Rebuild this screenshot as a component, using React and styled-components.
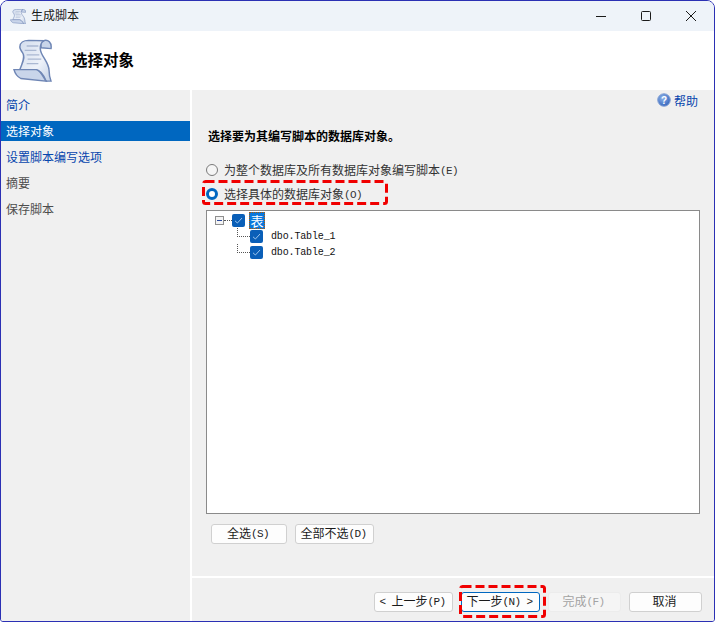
import React from "react";
import styled, { createGlobalStyle } from "styled-components";

const Global = createGlobalStyle`
  html, body {
    margin: 0;
    padding: 0;
    background: #ffffff;
  }
  body {
    font-family: "Noto Sans CJK SC", "Liberation Sans", sans-serif;
    font-size: 12px;
    color: #1a1a1a;
  }
`;

const Window = styled.div`
  width: 715px;
  height: 622px;
  box-sizing: border-box;
  border: 1px solid #2b30b4;
  border-radius: 8px 8px 3px 3px;
  overflow: hidden;
  display: flex;
  flex-direction: column;
  background: #ffffff;
`;

const TitleBar = styled.div`
  height: 30px;
  flex: none;
  display: flex;
  align-items: center;
  background: #eef3f9;
  padding-left: 9px;
`;

const TitleText = styled.span`
  margin: 0 0 2px 5px;
  line-height: 16px;
`;

const Controls = styled.div`
  margin-left: auto;
  display: flex;
`;

const ControlButton = styled.div`
  width: 45.5px;
  height: 28px;
  display: flex;
  align-items: center;
  justify-content: center;
  margin-left: ${(p) => p.$nudge || 0}px;
`;

const Header = styled.div`
  height: 59px;
  flex: none;
  display: flex;
  align-items: center;
  padding-left: 12px;
  background: #ffffff;
`;

const HeaderTitle = styled.h1`
  margin: 0 0 4px 20px;
  font-size: 15.5px;
  font-weight: 700;
  color: #000000;
`;

const Main = styled.div`
  flex: 1;
  display: flex;
  min-height: 0;
`;

const Sidebar = styled.nav`
  width: 189px;
  flex: none;
  box-sizing: border-box;
  margin-right: 2px;
  padding-top: 5px;
  background: #f0f0f0;
  display: flex;
  flex-direction: column;
  gap: 6px;
`;

const NavItem = styled.div`
  height: 20px;
  line-height: 20px;
  padding-left: 5px;
  color: ${(p) => (p.$active ? "#ffffff" : p.$link ? "#0645ad" : "#4d4d4d")};
  background: ${(p) => (p.$active ? "#0067c0" : "transparent")};
`;

const Content = styled.section`
  flex: 1;
  display: flex;
  flex-direction: column;
  background: #f0f0f0;
`;

const HelpRow = styled.div`
  height: 20px;
  margin-bottom: 2px;
  display: flex;
  align-items: center;
  justify-content: flex-end;
  gap: 3px;
  padding-right: 16px;
  color: #0645ad;
`;

const Lead = styled.p`
  margin: 16px 0 18px 16px;
  line-height: 16px;
  font-weight: 700;
  color: #000000;
`;

const RadioRow = styled.label`
  position: relative;
  display: flex;
  align-items: center;
  gap: 6px;
  height: 16px;
  margin: 0 0 8px 14px;
  color: #333333;
`;

const RadioText = styled.span`
  margin-bottom: 2px;
`;

const RadioDot = styled.span`
  width: 12px;
  height: 12px;
  box-sizing: border-box;
  border-radius: 50%;
  background: ${(p) => (p.$on ? "#ffffff" : "#f5f5f5")};
  border: ${(p) => (p.$on ? "3.5px solid #0067c0" : "1px solid #7a7a7a")};
`;

const Lat = styled.span`
  font-family: "Liberation Mono", monospace;
  font-size: 11px;
  letter-spacing: -0.6px;
  vertical-align: 1px;
`;

const TreeBox = styled.div`
  height: 304px;
  box-sizing: border-box;
  margin: 0 14px 0 14px;
  padding: 1px 0 0 8px;
  border: 1px solid #8a8a8a;
  background: #ffffff;
`;

const TreeRow = styled.div`
  height: 16px;
  display: flex;
  align-items: center;
  padding-left: ${(p) => p.$indent || 0}px;
`;

const Expander = styled.span`
  width: 9px;
  height: 9px;
  box-sizing: border-box;
  border: 1px solid #8e8e8e;
  background: #f4f4f4;
  display: flex;
  align-items: center;
  justify-content: center;

  &::before {
    content: "";
    width: 5px;
    height: 1px;
    background: #2b4a9b;
  }
`;

const RootStub = styled.span`
  width: 8px;
  border-top: 1px dotted #555555;
`;

const Twig = styled.span`
  align-self: flex-start;
  width: 12px;
  height: 8px;
  border-left: 1px dotted #555555;
  border-bottom: 1px dotted #555555;
`;

const Check = styled.span`
  width: 13px;
  height: 13px;
  flex: none;
  border-radius: 2px;
  background: #0a5fb8;
  display: flex;
  align-items: center;
  justify-content: center;
`;

const TableTag = styled.span`
  width: 16px;
  height: 17px;
  margin-left: 4px;
  box-sizing: border-box;
  border: 1px dotted #b35a00;
  background: #0a78dc;
  color: #ffffff;
  font-size: 13px;
  line-height: 15px;
  text-align: center;
`;

const NodeText = styled.span`
  margin-left: 8px;
  font-family: "Liberation Mono", monospace;
  font-size: 10px;
  letter-spacing: -0.15px;
  color: #111111;
`;

const SelectRow = styled.div`
  display: flex;
  gap: 8px;
  margin: 10px 0 0 19px;
`;

const Button = styled.button`
  position: relative;
  height: 20px;
  width: ${(p) => p.$w}px;
  padding: 0 2px 2px 0;
  box-sizing: border-box;
  font: inherit;
  line-height: 16px;
  border-radius: 3px;
  border: ${(p) =>
    p.$primary ? "1.5px solid #0067c0" : p.$off ? "1px solid #ececec" : "1px solid #d0d0d0"};
  background: ${(p) => (p.$off ? "#f5f5f5" : "#fdfdfd")};
  color: ${(p) => (p.$off ? "#a3a3a3" : "#1a1a1a")};
`;

const Footer = styled.div`
  margin-top: auto;
  height: 45px;
  box-sizing: border-box;
  border-top: 2px solid #ffffff;
  padding: 14px 12px 0 0;
  display: flex;
  justify-content: flex-end;
  gap: 8px;
`;

const DashFrame = styled.svg`
  position: absolute;
  left: ${(p) => p.$left}px;
  top: ${(p) => p.$top}px;
  pointer-events: none;
  overflow: visible;
`;

// red annotation drawn over the dialog, dashes are longer than css dashed gives
const RedDash = ({ left, top, w, h }) => (
  <DashFrame $left={left} $top={top} width={w} height={h}>
    <rect
      x="1.5"
      y="1.5"
      width={w - 3}
      height={h - 3}
      rx="2"
      fill="none"
      stroke="#f00000"
      strokeWidth="3"
      strokeDasharray="9 4"
    />
  </DashFrame>
);

const ScrollIcon = ({ w, h, id }) => (
  <svg width={w} height={h} viewBox="7 2 40 49" preserveAspectRatio="none">
    <defs>
      <linearGradient id={id} x1="0" y1="0" x2="1" y2="1">
        <stop offset="0" stopColor="#d3ddee" />
        <stop offset="0.6" stopColor="#eef2f9" />
        <stop offset="1" stopColor="#c2d0e6" />
      </linearGradient>
    </defs>
    <path
      d="M38 4C43 2 47 6 46 13L36 12C35 8 36 5 38 4Z"
      fill="#c9d5ea"
      stroke="#6f86b5"
      strokeWidth="1.5"
    />
    <path
      d="M14 11C14 6 18 3.5 23 3.5L39 4C36 5 35 9 35 13C35 21 44 28 44 38C44 43 45 47 46 50L41 50C38 42 35 37 30 37L14 37C16 30 20 24 17 18C15 15 14 13 14 11Z"
      fill={`url(#${id})`}
      stroke="#6f86b5"
      strokeWidth="1.5"
    />
    <path
      d="M8 37L31 37C36 39 38 46 41 50L15 47C11 45 9 41 8 37Z"
      fill="#c9d5ea"
      stroke="#6f86b5"
      strokeWidth="1.5"
    />
    <path
      d="M21 10H33M19 15H31M21 20H34M22 25H36M21 30H33"
      stroke="#aab8d2"
      strokeWidth="1.5"
      fill="none"
    />
  </svg>
);

const HelpIcon = () => (
  <svg width="14" height="14" viewBox="0 0 14 14">
    <defs>
      <radialGradient id="helpFill" cx="0.4" cy="0.35" r="0.8">
        <stop offset="0" stopColor="#8fb4ea" />
        <stop offset="1" stopColor="#2456b4" />
      </radialGradient>
    </defs>
    <circle cx="7" cy="7" r="6.3" fill="url(#helpFill)" stroke="#8aa6d6" strokeWidth="1" />
    <text
      x="7"
      y="10.6"
      textAnchor="middle"
      fontSize="10"
      fontWeight="700"
      fontFamily="Liberation Sans, sans-serif"
      fill="#ffffff"
    >
      ?
    </text>
  </svg>
);

const CheckMark = () => (
  <svg width="9" height="9" viewBox="0 0 9 9">
    <path d="M1 4.8L3.4 7L8 2" fill="none" stroke="#9cc4ec" strokeWidth="1" />
  </svg>
);

const App = () => {
  return (
    <>
      <Global />
      <Window>
        <TitleBar>
          <ScrollIcon w={16} h={15} id="scrollSmall" />
          <TitleText>生成脚本</TitleText>
          <Controls>
            <ControlButton>
              <svg width="10" height="10" viewBox="0 0 10 10">
                <path d="M0 5.5H10" stroke="#1a1a1a" strokeWidth="1" />
              </svg>
            </ControlButton>
            <ControlButton $nudge={-1}>
              <svg width="10" height="10" viewBox="0 0 10 10">
                <rect x="0.5" y="0.5" width="9" height="9" rx="1" fill="none" stroke="#1a1a1a" />
              </svg>
            </ControlButton>
            <ControlButton>
              <svg width="10" height="10" viewBox="0 0 10 10">
                <path d="M0 0L10 10M10 0L0 10" stroke="#1a1a1a" strokeWidth="1" />
              </svg>
            </ControlButton>
          </Controls>
        </TitleBar>

        <Header>
          <ScrollIcon w={39} h={43} id="scrollLarge" />
          <HeaderTitle>选择对象</HeaderTitle>
        </Header>

        <Main>
          <Sidebar>
            <NavItem $link>简介</NavItem>
            <NavItem $active>选择对象</NavItem>
            <NavItem $link>设置脚本编写选项</NavItem>
            <NavItem>摘要</NavItem>
            <NavItem>保存脚本</NavItem>
          </Sidebar>

          <Content>
            <HelpRow>
              <HelpIcon />
              帮助
            </HelpRow>
            <Lead>选择要为其编写脚本的数据库对象。</Lead>
            <RadioRow>
              <RadioDot />
              <RadioText>
                为整个数据库及所有数据库对象编写脚本<Lat>(E)</Lat>
              </RadioText>
            </RadioRow>
            <RadioRow>
              <RadioDot $on />
              <RadioText>
                选择具体的数据库对象<Lat>(O)</Lat>
              </RadioText>
              <RedDash left={-4} top={-6} w={186} h={25} />
            </RadioRow>
            <TreeBox>
              <TreeRow>
                <Expander />
                <RootStub />
                <Check>
                  <CheckMark />
                </Check>
                <TableTag>表</TableTag>
              </TreeRow>
              <TreeRow $indent={22}>
                <Twig />
                <Check>
                  <CheckMark />
                </Check>
                <NodeText>dbo.Table_1</NodeText>
              </TreeRow>
              <TreeRow $indent={22}>
                <Twig />
                <Check>
                  <CheckMark />
                </Check>
                <NodeText>dbo.Table_2</NodeText>
              </TreeRow>
            </TreeBox>
            <SelectRow>
              <Button $w={76}>
                全选<Lat>(S)</Lat>
              </Button>
              <Button $w={79}>
                全部不选<Lat>(D)</Lat>
              </Button>
            </SelectRow>
            <Footer>
              <Button $w={79}>
                <Lat>&lt; </Lat>上一步<Lat>(P)</Lat>
              </Button>
              <Button $w={79} $primary>
                下一步<Lat>(N) &gt;</Lat>
                <RedDash left={-3} top={-8} w={87} h={33} />
              </Button>
              <Button $w={73} $off>
                完成<Lat>(F)</Lat>
              </Button>
              <Button $w={73}>取消</Button>
            </Footer>
          </Content>
        </Main>
      </Window>
    </>
  );
};

export default App;
